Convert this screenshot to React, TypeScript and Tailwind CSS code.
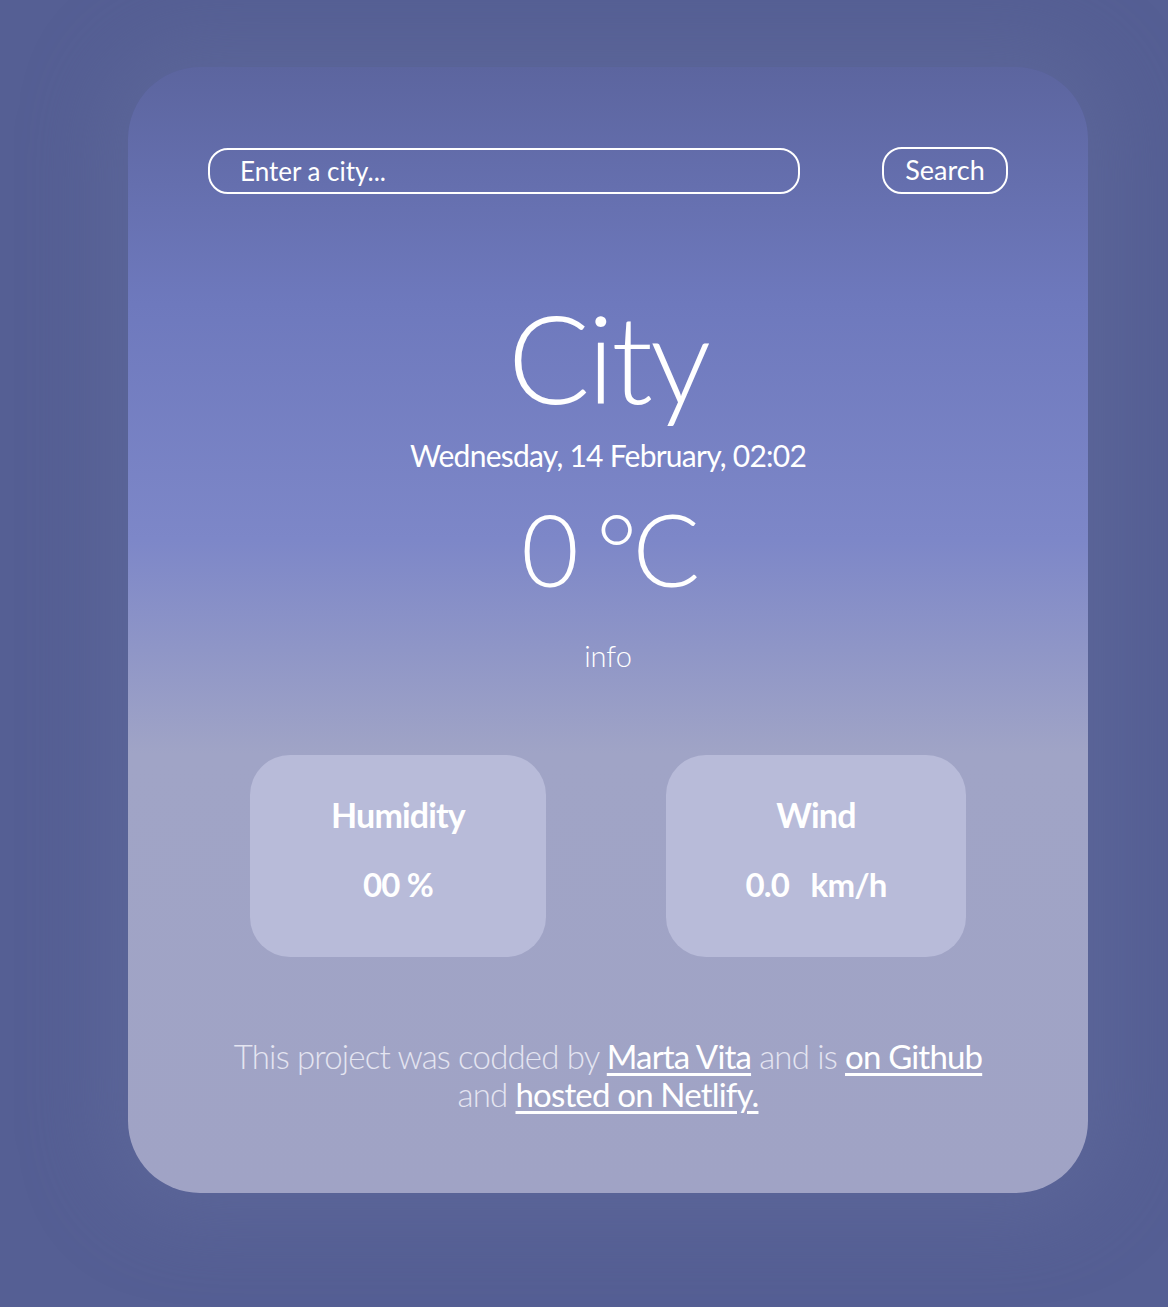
const stats = [
  { label: "Humidity", value: "00 %", width: "w-[296px]" },
  { label: "Wind", value: "0.0\u00a0\u00a0\u00a0km/h", width: "w-[300px]" },
] as const;

export default function App() {
  return (
    <div
      className="min-h-[1307px] bg-[#555f94] pl-[48px] pt-[67px] text-white"
      style={{ fontFamily: "Lato, 'Noto Sans', sans-serif" }}
    >
      <div className="mx-auto flex h-[1126px] w-[960px] flex-col items-center rounded-[72px] bg-[linear-gradient(180deg,#5c659f_0%,#6e79bd_21%,#7d87c8_42%,#a0a4c6_61%,#a0a3c5_100%)] shadow-[0_0_70px_30px_rgba(95,105,155,0.6)]">
        <form className="mt-[80px] flex w-[800px] items-center justify-between" onSubmit={(e) => e.preventDefault()}>
          <input
            type="text"
            placeholder="Enter a city..."
            className="h-[46px] w-[592px] rounded-[20px] border-2 border-white bg-transparent px-[30px] text-[26px] text-white outline-none placeholder:text-white"
          />
          <button
            type="submit"
            className="h-[47px] w-[126px] rounded-[20px] border-2 border-white text-[27px] text-white"
          >
            Search
          </button>
        </form>

        <h1 className="mt-[102px] text-[122px] font-light leading-none tracking-tight">City</h1>
        <p className="mt-[22px] text-[30px] leading-none tracking-tight">Wednesday, 14 February, 02:02</p>
        <p className="mt-[28px] text-[100px] font-light leading-none tracking-tighter">0 °C</p>
        <p className="mt-[43px] text-[29px] font-light leading-none">info</p>

        <div className="mt-[85px] flex w-[716px] justify-between">
          {stats.map((s) => (
            <div
              key={s.label}
              className={`flex h-[202px] ${s.width} flex-col items-center rounded-[40px] bg-[#b8bbd9] pt-[43px]`}
            >
              <h3 className="text-[34px] font-bold leading-none tracking-tight">{s.label}</h3>
              <p className="mt-[36px] text-[33px] font-bold leading-none tracking-tight">{s.value}</p>
            </div>
          ))}
        </div>

        <p className="mt-[80px] w-[860px] text-center text-[33px] font-light leading-[38px] tracking-tight text-[#e4e5f1]">
          This project was codded by{" "}
          <a href="#" className="font-normal text-white underline underline-offset-4">
            Marta Vita
          </a>{" "}
          and is{" "}
          <a href="#" className="font-normal text-white underline underline-offset-4">
            on Github
          </a>
          <br />
          and{" "}
          <a href="#" className="font-normal text-white underline underline-offset-4">
            hosted on Netlify.
          </a>
        </p>
      </div>
    </div>
  );
}
